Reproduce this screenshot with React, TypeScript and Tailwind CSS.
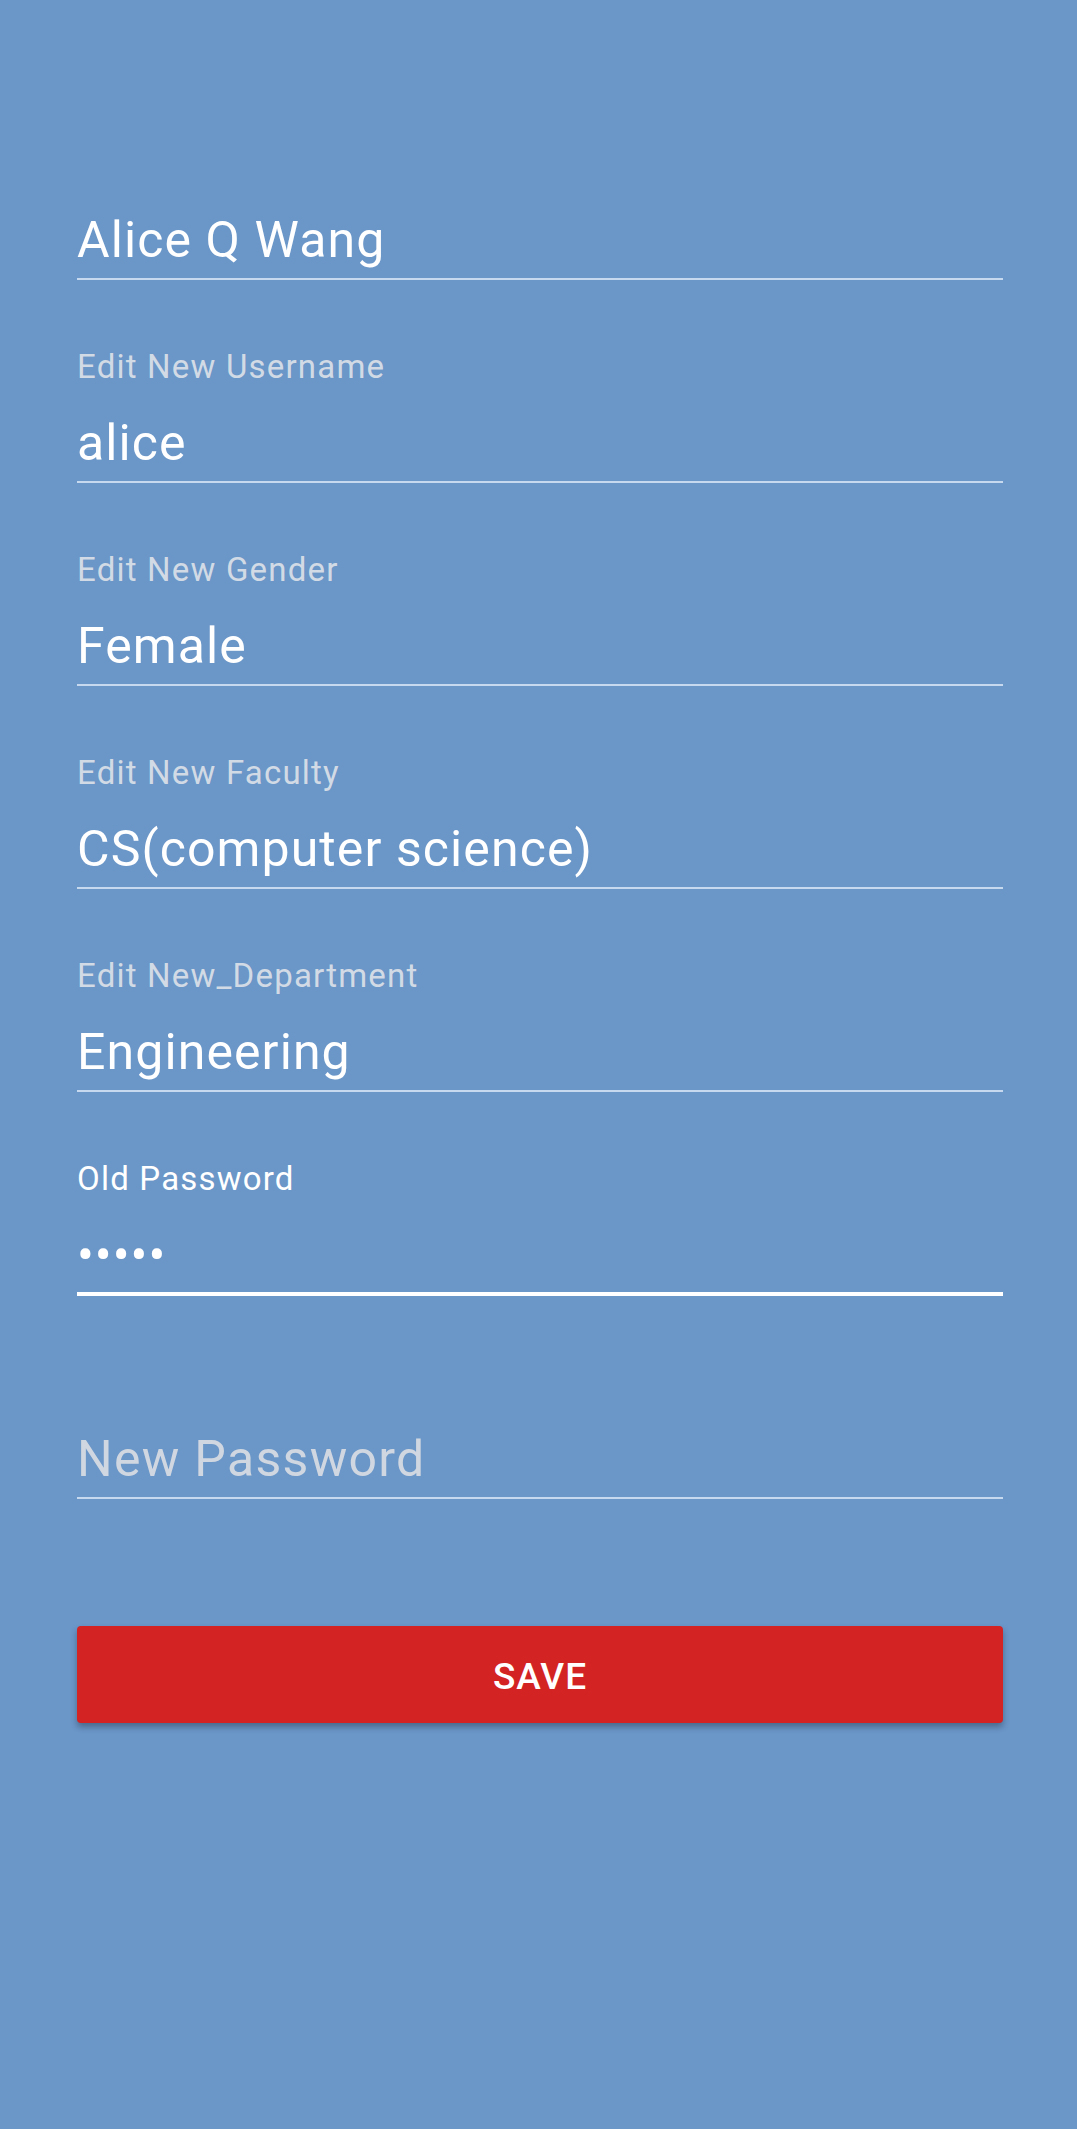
const fields = [
  { label: "", value: "Alice Q Wang" },
  { label: "Edit New Username", value: "alice" },
  { label: "Edit New Gender", value: "Female" },
  { label: "Edit New Faculty", value: "CS(computer science)" },
  { label: "Edit New_Department", value: "Engineering" },
];

const Field = ({ label, value }: { label: string; value: string }) => (
  <div className="mb-[67px]">
    <div className="h-[40px] text-[33px] leading-[40px] tracking-[1.2px] text-[#d2dbe5]">{label}</div>
    <div className="mt-[26px] h-[60px] text-[50px] leading-[60px] tracking-[1.1px] text-white">{value}</div>
    <div className="mt-[8px] h-[2px] bg-[#c6d9ee]" />
  </div>
);

export default function App() {
  return (
    <div
      className="min-h-screen w-full bg-[#6a96c8] pl-[77px] pr-[74px] pt-[144px]"
      style={{ fontFamily: "Roboto, 'Noto Sans', sans-serif" }}
    >
      {fields.map((f) => (
        <Field key={f.value} label={f.label} value={f.value} />
      ))}

      {/* focused password field */}
      <div className="mb-[67px]">
        <div className="h-[40px] text-[33px] leading-[40px] tracking-[1.2px] text-white">Old Password</div>
        <div className="mt-[26px] h-[60px] text-[50px] leading-[60px] tracking-[1px] text-white">•••••</div>
        <div className="mt-[7px] h-[4px] bg-white" />
      </div>

      {/* empty field, hint shown in place */}
      <div>
        <div className="h-[40px]" />
        <div className="mt-[26px] h-[60px] text-[50px] leading-[60px] tracking-[1.3px] text-[#d0d7e0]">New Password</div>
        <div className="mt-[8px] h-[2px] bg-[#c6d9ee]" />
      </div>

      <button className="mt-[127px] flex h-[97px] w-full items-center justify-center rounded-[4px] bg-[#d32323] pt-[4px] text-[37px] font-medium tracking-[1px] text-white shadow-[0_4px_6px_rgba(0,0,0,0.3)]">
        SAVE
      </button>
    </div>
  );
}
